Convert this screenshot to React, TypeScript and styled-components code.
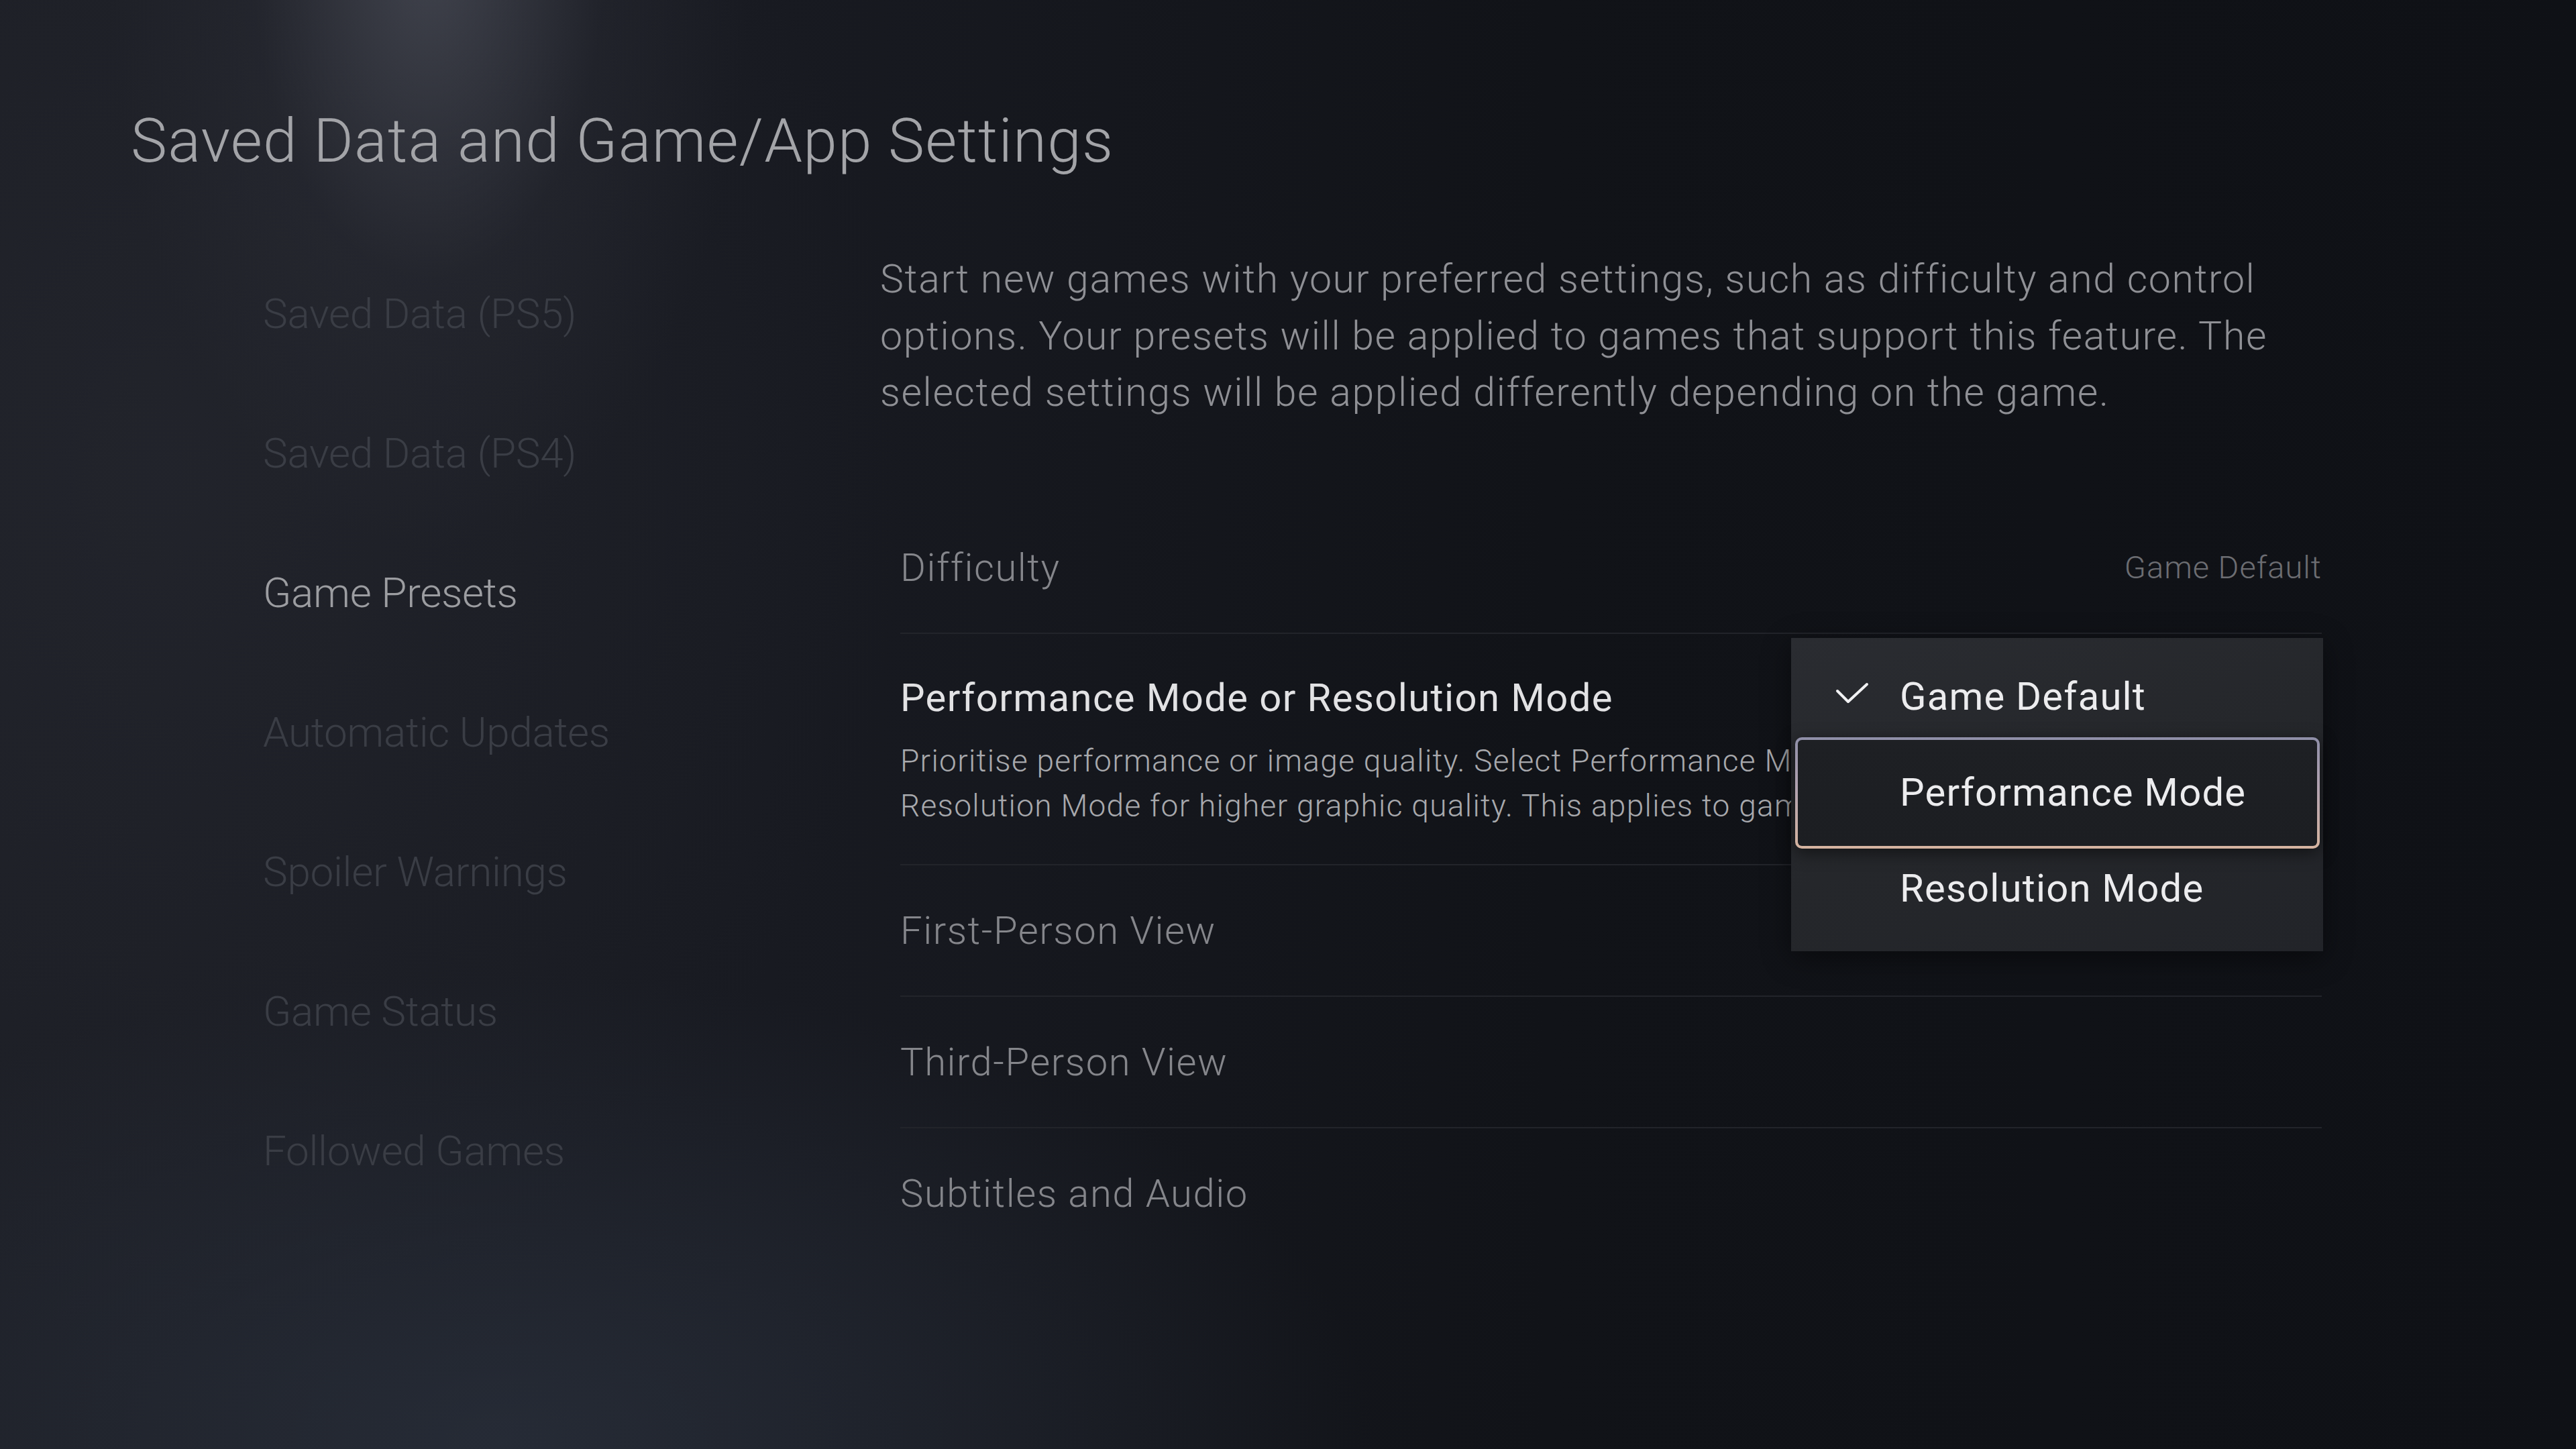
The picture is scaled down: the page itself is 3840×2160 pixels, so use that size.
import React from "react";
import styled, { createGlobalStyle } from "styled-components";

const GlobalStyle = createGlobalStyle`
  html, body {
    margin: 0;
    padding: 0;
    background: #13151b;
  }
  body {
    font-family: Roboto, "Open Sans", "Liberation Sans", sans-serif;
    -webkit-font-smoothing: antialiased;
  }
`;

const Screen = styled.div`
  position: relative;
  width: 3840px;
  height: 2160px;
  overflow: hidden;
  box-sizing: border-box;
  padding: 155px 0 0 195px;
  background:
    radial-gradient(ellipse 480px 900px at 640px -80px, rgba(95, 98, 110, 0.55), rgba(60, 62, 72, 0.18) 55%, rgba(0, 0, 0, 0) 100%),
    radial-gradient(ellipse 1300px 700px at 750px 2150px, rgba(48, 56, 70, 0.55), rgba(0, 0, 0, 0) 100%),
    radial-gradient(ellipse 1100px 1300px at 250px 700px, rgba(40, 42, 50, 0.5), rgba(0, 0, 0, 0) 100%),
    linear-gradient(90deg, #1c1e25 0%, #181a21 30%, #111318 60%, #0f1116 100%);
  font-family: Roboto, "Open Sans", "Liberation Sans", sans-serif;
  font-weight: 300;
`;

const PageTitle = styled.h1`
  margin: 0;
  font-size: 91px;
  line-height: 110px;
  font-weight: 300;
  color: #a3a4a8;
  letter-spacing: 1.2px;
  white-space: nowrap;
`;

const Body = styled.div`
  display: grid;
  grid-template-columns: 920px 2150px;
  margin-top: 99px;
  margin-left: 197px;
`;

const Sidebar = styled.nav`
  display: flex;
  flex-direction: column;
`;

const NavItem = styled.div<{ $active?: boolean }>`
  height: 208px;
  line-height: 208px;
  font-size: 62px;
  font-weight: 300;
  letter-spacing: -0.3px;
  white-space: nowrap;
  color: ${(p) => (p.$active ? "#9c9da1" : "#3a3d45")};
`;

const Content = styled.section`
  display: flex;
  flex-direction: column;
  padding-top: 10px;
`;

const Intro = styled.p`
  margin: 0;
  font-size: 59px;
  line-height: 84.5px;
  font-weight: 300;
  letter-spacing: 1.6px;
  color: #8f9095;
  width: 2110px;
`;

const SettingsList = styled.div`
  display: flex;
  flex-direction: column;
  margin-top: 121px;
  margin-left: 30px;
  width: 2119px;
`;

const Row = styled.div<{ $divider?: boolean }>`
  position: relative;
  display: flex;
  align-items: center;
  justify-content: space-between;
  height: 196px;
  box-sizing: border-box;
  border-bottom: 2px solid ${(p) => (p.$divider ? "#22242a" : "transparent")};
`;

const TallRow = styled.div`
  position: relative;
  display: flex;
  flex-direction: column;
  height: 345px;
  box-sizing: border-box;
  padding-top: 60px;
  border-bottom: 2px solid #22242a;
`;

const RowLabel = styled.div<{ $bright?: boolean }>`
  font-size: 58px;
  line-height: 70px;
  font-weight: ${(p) => (p.$bright ? 400 : 300)};
  letter-spacing: ${(p) => (p.$bright ? "1.4px" : "1.5px")};
  color: ${(p) => (p.$bright ? "#e2e2e4" : "#85868b")};
  white-space: nowrap;
`;

const RowValue = styled.div`
  font-size: 47px;
  font-weight: 300;
  letter-spacing: 1px;
  color: #6c6d72;
  white-space: nowrap;
`;

const RowDesc = styled.div`
  margin-top: 26px;
  width: 1328px;
  font-size: 46px;
  line-height: 67px;
  font-weight: 300;
  letter-spacing: 1.3px;
  color: #a8a9ad;
  white-space: nowrap;
  overflow: hidden;
`;

const DescLine = styled.span`
  display: block;
`;

const Dropdown = styled.div`
  position: absolute;
  top: 6px;
  right: -2px;
  width: 793px;
  box-sizing: border-box;
  padding: 16px 0 22px;
  background: linear-gradient(160deg, #2a2c31 0%, #25272b 50%, #222429 100%);
  box-shadow: 0 10px 40px rgba(0, 0, 0, 0.45);
  z-index: 2;
  display: flex;
  flex-direction: column;
`;

const Option = styled.div<{ $focused?: boolean }>`
  position: relative;
  height: 143px;
  display: flex;
  align-items: center;
  padding-left: 162px;
  font-size: 58px;
  font-weight: 400;
  letter-spacing: 1.2px;
  color: #ececee;
  white-space: nowrap;

  ${(p) =>
    p.$focused &&
    `
    &::before {
      content: "";
      position: absolute;
      left: 6px;
      right: 5px;
      top: -11px;
      bottom: -12px;
      border: 4px solid transparent;
      border-radius: 10px;
      background:
        linear-gradient(#1e2024, #1c1e22) padding-box,
        linear-gradient(180deg, #8f8fa8 0%, #b1a2b0 45%, #d6b4a0 100%) border-box;
      box-shadow: 0 6px 24px rgba(0, 0, 0, 0.5);
    }
  `}
`;

const OptionText = styled.span`
  position: relative;
`;

const CheckIcon = styled.svg`
  position: absolute;
  left: 64px;
  top: 50%;
  margin-top: -21px;
  width: 56px;
  height: 42px;
`;

const Check = () => (
  <CheckIcon viewBox="0 0 56 42" fill="none">
    <path d="M5 13 L21 29 L49 3" stroke="#f2f2f4" strokeWidth="4" strokeLinecap="round" strokeLinejoin="round" />
  </CheckIcon>
);

const navItems = [
  "Saved Data (PS5)",
  "Saved Data (PS4)",
  "Game Presets",
  "Automatic Updates",
  "Spoiler Warnings",
  "Game Status",
  "Followed Games",
];

export default function App() {
  return (
    <>
      <GlobalStyle />
      <Screen>
        <PageTitle>Saved Data and Game/App Settings</PageTitle>
        <Body>
          <Sidebar>
            {navItems.map((n) => (
              <NavItem key={n} $active={n === "Game Presets"}>
                {n}
              </NavItem>
            ))}
          </Sidebar>
          <Content>
            <Intro>
              Start new games with your preferred settings, such as difficulty and control
              options. Your presets will be applied to games that support this feature. The
              selected settings will be applied differently depending on the game.
            </Intro>
            <SettingsList>
              <Row $divider>
                <RowLabel>Difficulty</RowLabel>
                <RowValue>Game Default</RowValue>
              </Row>
              <TallRow>
                <RowLabel $bright>Performance Mode or Resolution Mode</RowLabel>
                <RowDesc>
                  <DescLine>
                    Prioritise performance or image quality. Select Performance Mode for higher frame rates or
                  </DescLine>
                  <DescLine>
                    Resolution Mode for higher graphic quality. This applies to games that support this feature.
                  </DescLine>
                </RowDesc>
                <Dropdown>
                  <Option>
                    <Check />
                    <OptionText>Game Default</OptionText>
                  </Option>
                  <Option $focused>
                    <OptionText>Performance Mode</OptionText>
                  </Option>
                  <Option>
                    <OptionText>Resolution Mode</OptionText>
                  </Option>
                </Dropdown>
              </TallRow>
              <Row $divider>
                <RowLabel>First-Person View</RowLabel>
              </Row>
              <Row $divider>
                <RowLabel>Third-Person View</RowLabel>
              </Row>
              <Row>
                <RowLabel>Subtitles and Audio</RowLabel>
              </Row>
            </SettingsList>
          </Content>
        </Body>
      </Screen>
    </>
  );
}
